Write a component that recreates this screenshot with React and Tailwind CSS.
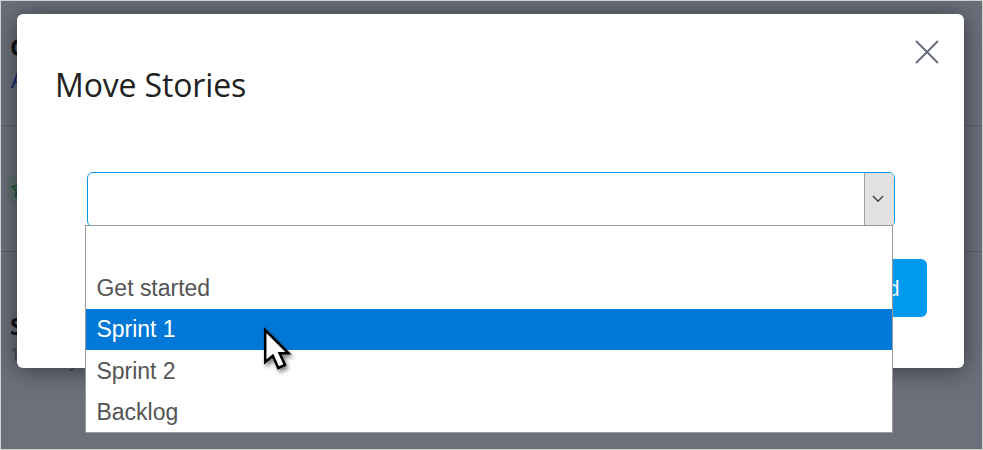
import { Star } from "lucide-react";

const options = ["", "Get started", "Sprint 1", "Sprint 2", "Backlog"];

function Backdrop() {
  return (
    <div className="flex h-full flex-col bg-[#6c707b] font-['Open_Sans',sans-serif]">
      <div className="h-[125px] shrink-0 border-b border-[#5b5f6b] pt-[29px] pl-[9px]">
        <div className="text-[24px] leading-[34px] font-bold text-[#10131d]">G</div>
        <div className="pl-px text-[22px] leading-[30px] text-[#10246b]">A</div>
      </div>
      <div className="h-[126px] shrink-0 border-b border-[#5b5f6b] pt-[49px] pl-[6px]">
        <div className="flex h-[28px] w-[28px] items-center justify-center rounded-[8px] bg-[#5f706f]">
          <Star size={20} className="text-[#145c34]" />
        </div>
      </div>
      <div className="grow pt-[61px] pl-[9px]">
        <div className="text-[24px] leading-[26px] font-bold text-[#10131d]">S</div>
        <div className="flex pt-[3px] text-[18px] leading-[24px] text-[#454954]">
          <span className="w-[59px]">1</span>
          <span className="pt-[6px]">y</span>
        </div>
      </div>
    </div>
  );
}

function Cursor() {
  return (
    <svg
      className="absolute top-[99px] left-[175px] overflow-visible drop-shadow-[2px_3px_2px_rgba(0,0,0,0.5)]"
      width="32"
      height="46"
      viewBox="0 0 32 46"
    >
      <path
        d="M4.2 5V37L11.8 30.8L17.3 43L24 40L18.6 28.3H27.5Z"
        fill="#fafafa"
        stroke="#000"
        strokeWidth="2.5"
      />
    </svg>
  );
}

function Dropdown() {
  return (
    <div className="absolute top-[52px] -left-[3px] z-10 h-[208px] w-[808px] border border-[#999] bg-white font-['Liberation_Sans',Arial,sans-serif]">
      {options.map((label, i) => (
        <div
          key={i}
          className={
            "flex items-center pl-[10.5px] text-[23px] tracking-[-0.02px] " +
            (i === 2
              ? "h-[41px] bg-[#0078d7] text-white"
              : i === 0 || i === 3
                ? "h-[42px] text-[#555]"
                : "h-[41px] text-[#555]")
          }
        >
          {label}
        </div>
      ))}
      <Cursor />
    </div>
  );
}

export default function App() {
  return (
    <div className="relative h-[450px] w-[983px] overflow-hidden border border-[#cbd3cd]">
      <Backdrop />
      <div className="absolute top-[13px] left-[16px] h-[354px] w-[947px] rounded-[6px] bg-white pr-[37px] pl-[38px] font-['Open_Sans',sans-serif] shadow-[0_2px_24px_rgba(0,0,0,0.5)]">
        <div className="flex h-[158px] justify-between">
          <h1 className="pt-[48px] text-[32px] leading-[46px] tracking-[-0.15px] text-[#222]">Move Stories</h1>
          <svg
            className="mt-[26px] -mr-[12px]"
            width="24"
            height="24"
            viewBox="0 0 24 24"
            fill="none"
            stroke="#646b7c"
            strokeWidth="1.9"
          >
            <path d="M1 1L23 23M23 1L1 23" />
          </svg>
        </div>
        <div className="relative ml-[32px] flex h-[55px] w-[808px] overflow-visible rounded-[6px] border border-[#0b96e4] bg-white">
          <div className="grow" />
          <div className="flex w-[30px] items-center justify-center rounded-r-[5px] border-l border-[#a0a0a0] bg-[#e1e1e1] pr-[3px] pb-[2px]">
            <svg width="12" height="8" viewBox="0 0 12 8" fill="none" stroke="#444" strokeWidth="1.4">
              <path d="M1 1L6 6.2L11 1" />
            </svg>
          </div>
          <Dropdown />
        </div>
        <div className="mt-[32px] flex justify-end">
          <button className="h-[58px] rounded-[6px] bg-[#0099ee] px-[27px] pb-[2px] text-[22px] text-white">
            Add
          </button>
        </div>
      </div>
    </div>
  );
}
